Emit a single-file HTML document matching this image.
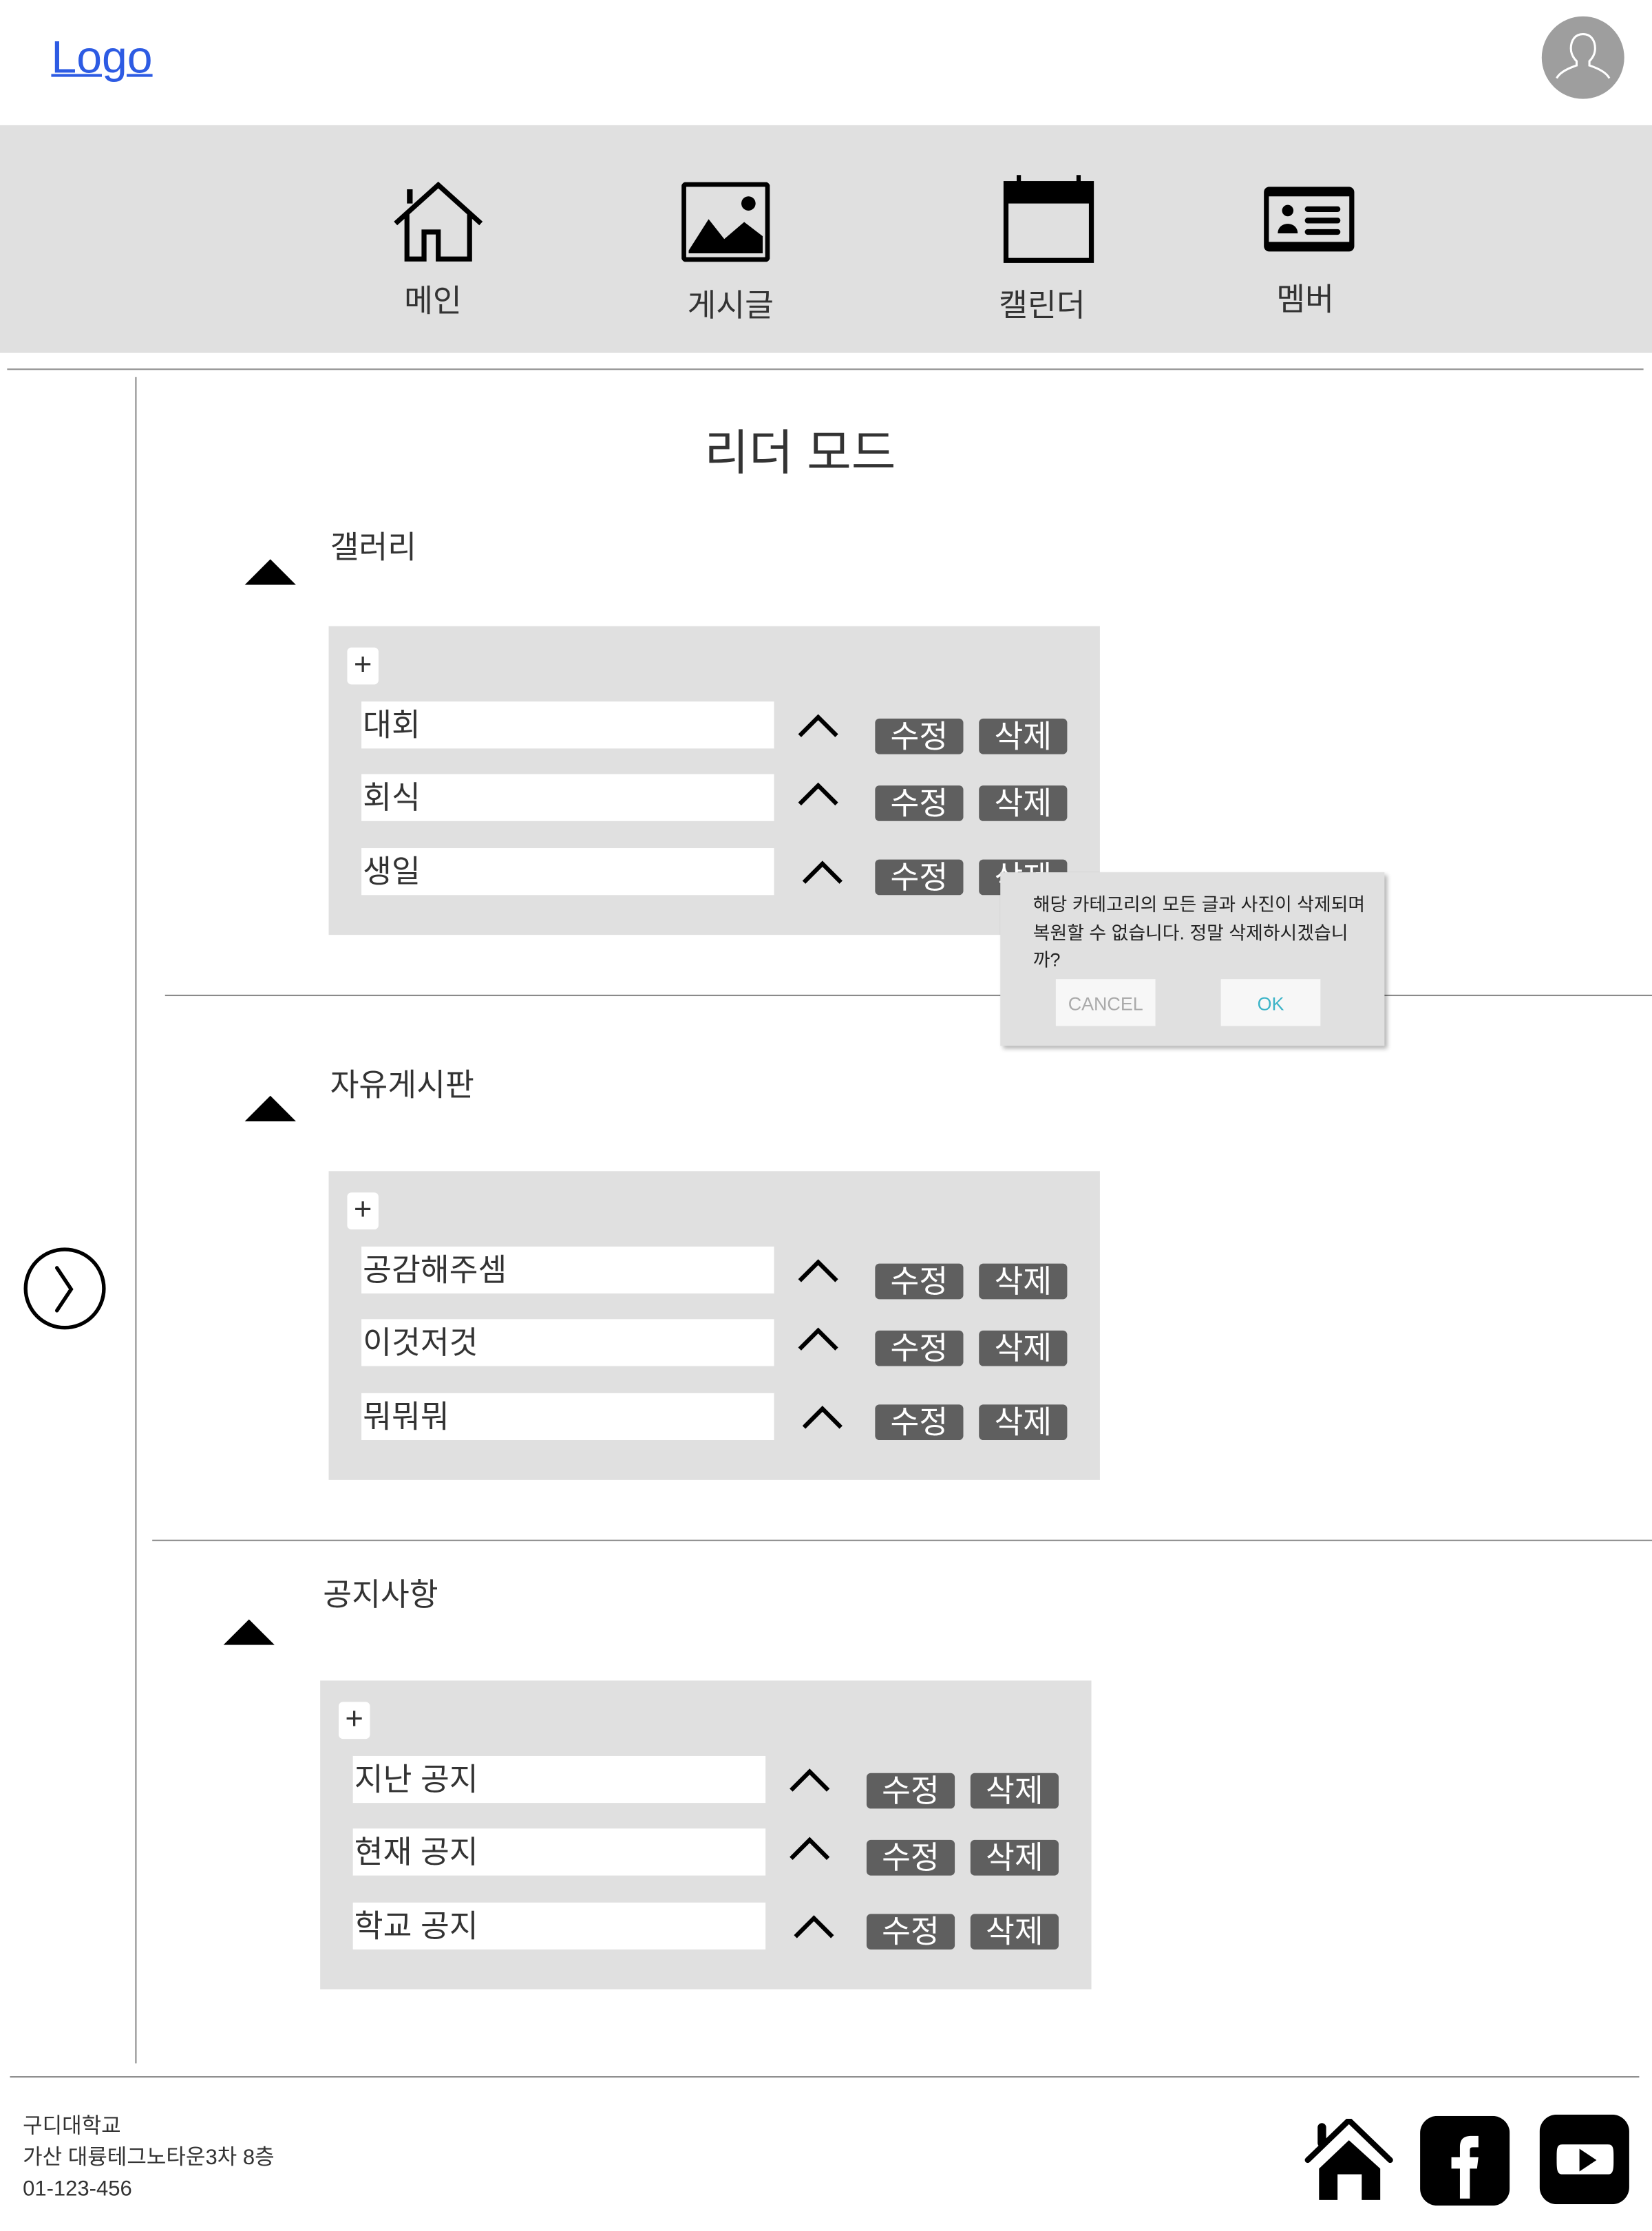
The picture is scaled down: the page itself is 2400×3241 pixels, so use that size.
<!DOCTYPE html>
<html><head><meta charset="utf-8">
<style>
html,body{margin:0;padding:0;background:#fff;width:2400px;height:3240px;overflow:hidden}
#w{position:absolute;left:0;top:0;width:1161px;height:1568px;transform:scale(2.0672,2.0672);transform-origin:0 0;font-family:"Liberation Sans","Noto Sans CJK KR",sans-serif;color:#333}
.a{position:absolute}
.t{position:absolute;white-space:nowrap;line-height:1}
.panel{position:absolute;width:542px;height:217px;background:#e0e0e0}
.plus{position:absolute;left:13px;top:15px;width:22px;height:26px;background:#fff;border-radius:3px;text-align:center;font-size:22px;line-height:24px;color:#333}
.in{position:absolute;left:23px;width:290px;height:33px;background:#fff;font-size:22px;line-height:33px;padding-left:1px;box-sizing:border-box;color:#333}
.btn{position:absolute;width:62px;height:25px;background:#5f5f5f;border-radius:3px;color:#fff;font-size:22px;line-height:25px;text-align:center}
.car{position:absolute;width:30px;height:18px}
.hl{position:absolute;height:1px;background:#8a8a8a}
</style></head><body><div id="w">

<div class="t" style="left:36px;top:24px;font-size:32px;color:#2d5be3;text-decoration:underline;text-decoration-thickness:2px">Logo</div>
<svg class="a" style="left:1083px;top:11px" width="59" height="59" viewBox="0 0 59 59"><circle cx="29.5" cy="29.5" r="29" fill="#9e9e9e"/><path d="M29.5 13c-6 0-8.5 5-8.5 10 0 4 2 7 4 9v3c-6 2-12 5-14 9M29.5 13c6 0 8.5 5 8.5 10 0 4-2 7-4 9v3c6 2 12 5 14 9" fill="none" stroke="#fff" stroke-width="1.5"/></svg>

<div class="a" style="left:0;top:88px;width:1161px;height:160px;background:#e0e0e0"></div>
<svg class="a" style="left:276px;top:127px" width="64" height="58" viewBox="0 0 64 58"><path d="M2 30 L32 3 L62 30" fill="none" stroke="#000" stroke-width="3.5"/><path d="M10 22 V55 H22 V36 H32 V55 H54 V22" fill="none" stroke="#000" stroke-width="3.5"/><path d="M12 6 V16" stroke="#000" stroke-width="4"/></svg>
<svg class="a" style="left:479px;top:128px" width="62" height="56" viewBox="0 0 62 56"><rect x="1.5" y="1.5" width="59" height="53" rx="2" fill="none" stroke="#000" stroke-width="3.5"/><circle cx="47" cy="15" r="5" fill="#000"/><path d="M5 48 L19 26 L30 40 L44 28 L57 38 V50 H5Z" fill="#000"/></svg>
<svg class="a" style="left:705px;top:121px" width="64" height="64" viewBox="0 0 64 64"><rect x="2" y="8" width="60" height="54" fill="none" stroke="#000" stroke-width="3.5"/><rect x="2" y="8" width="60" height="14" fill="#000"/><path d="M11 2 V14 M53 2 V14" stroke="#000" stroke-width="3"/></svg>
<svg class="a" style="left:888px;top:131px" width="64" height="46" viewBox="0 0 64 46"><rect x="2" y="2" width="60" height="42" rx="2" fill="none" stroke="#000" stroke-width="3.5"/><rect x="2" y="2" width="60" height="5" fill="#000"/><rect x="2" y="39" width="60" height="5" fill="#000"/><circle cx="17" cy="17" r="4" fill="#000"/><path d="M10 33 C10 24 24 24 24 33Z" fill="#000"/><rect x="29" y="14" width="25" height="4" rx="2"/><rect x="29" y="22" width="25" height="4" rx="2"/><rect x="29" y="30" width="25" height="4" rx="2"/></svg>
<div class="t" style="left:284px;top:201px;font-size:22px">메인</div>
<div class="t" style="left:483px;top:204px;font-size:22px">게시글</div>
<div class="t" style="left:702px;top:204px;font-size:22px">캘린더</div>
<div class="t" style="left:897px;top:200px;font-size:22px">멤버</div>

<div class="hl" style="left:5px;top:259px;width:1150px"></div>
<div class="a" style="left:95px;top:265px;width:1px;height:1185px;background:#8a8a8a"></div>

<div class="t" style="left:495px;top:302px;font-size:34px">리더 모드</div>

<svg class="a" style="left:172px;top:393px" width="36" height="18"><path d="M0 18 L18 0 L36 18Z" fill="#000"/></svg>
<div class="t" style="left:232px;top:374px;font-size:22px">갤러리</div>
<div class="panel" style="left:231px;top:440px">
<div class="plus">+</div>
<div class="in" style="top:53px">대회</div>
<div class="in" style="top:104px">회식</div>
<div class="in" style="top:156px">생일</div>
<svg class="car" style="left:329px;top:61px"><path d="M2 16 L15 3 L28 16" fill="none" stroke="#000" stroke-width="3"/></svg>
<svg class="car" style="left:329px;top:109px"><path d="M2 16 L15 3 L28 16" fill="none" stroke="#000" stroke-width="3"/></svg>
<svg class="car" style="left:332px;top:164px"><path d="M2 16 L15 3 L28 16" fill="none" stroke="#000" stroke-width="3"/></svg>
<div class="btn" style="left:384px;top:65px">수정</div><div class="btn" style="left:457px;top:65px">삭제</div>
<div class="btn" style="left:384px;top:112px">수정</div><div class="btn" style="left:457px;top:112px">삭제</div>
<div class="btn" style="left:384px;top:164px">수정</div><div class="btn" style="left:457px;top:164px">삭제</div>
</div>
<div class="hl" style="left:116px;top:699px;width:1045px"></div>

<div class="a" style="left:703px;top:613px;width:270px;height:122px;background:#e0e0e0;box-shadow:2px 2px 3px rgba(0,0,0,.3)">
<div class="a" style="left:23px;top:13px;width:234px;font-size:13px;line-height:19.5px;color:#222;word-break:break-all">해당 카테고리의 모든 글과 사진이 삭제되며 복원할 수 없습니다. 정말 삭제하시겠습니까?</div>
<div class="a" style="left:39px;top:75px;width:70px;height:33px;background:#f7f7f7;color:#aaa;font-size:13px;line-height:36px;text-align:center">CANCEL</div>
<div class="a" style="left:155px;top:75px;width:70px;height:33px;background:#f7f7f7;color:#3cb4c8;font-size:13px;line-height:36px;text-align:center">OK</div>
</div>

<svg class="a" style="left:172px;top:770px" width="36" height="18"><path d="M0 18 L18 0 L36 18Z" fill="#000"/></svg>
<div class="t" style="left:232px;top:752px;font-size:22px">자유게시판</div>
<div class="panel" style="left:231px;top:823px">
<div class="plus">+</div>
<div class="in" style="top:53px">공감해주셈</div>
<div class="in" style="top:104px">이것저것</div>
<div class="in" style="top:156px">뭐뭐뭐</div>
<svg class="car" style="left:329px;top:61px"><path d="M2 16 L15 3 L28 16" fill="none" stroke="#000" stroke-width="3"/></svg>
<svg class="car" style="left:329px;top:109px"><path d="M2 16 L15 3 L28 16" fill="none" stroke="#000" stroke-width="3"/></svg>
<svg class="car" style="left:332px;top:164px"><path d="M2 16 L15 3 L28 16" fill="none" stroke="#000" stroke-width="3"/></svg>
<div class="btn" style="left:384px;top:65px">수정</div><div class="btn" style="left:457px;top:65px">삭제</div>
<div class="btn" style="left:384px;top:112px">수정</div><div class="btn" style="left:457px;top:112px">삭제</div>
<div class="btn" style="left:384px;top:164px">수정</div><div class="btn" style="left:457px;top:164px">삭제</div>
</div>
<div class="hl" style="left:107px;top:1082px;width:1054px"></div>

<svg class="a" style="left:157px;top:1138px" width="36" height="18"><path d="M0 18 L18 0 L36 18Z" fill="#000"/></svg>
<div class="t" style="left:227px;top:1110px;font-size:22px">공지사항</div>
<div class="panel" style="left:225px;top:1181px">
<div class="plus">+</div>
<div class="in" style="top:53px">지난 공지</div>
<div class="in" style="top:104px">현재 공지</div>
<div class="in" style="top:156px">학교 공지</div>
<svg class="car" style="left:329px;top:61px"><path d="M2 16 L15 3 L28 16" fill="none" stroke="#000" stroke-width="3"/></svg>
<svg class="car" style="left:329px;top:109px"><path d="M2 16 L15 3 L28 16" fill="none" stroke="#000" stroke-width="3"/></svg>
<svg class="car" style="left:332px;top:164px"><path d="M2 16 L15 3 L28 16" fill="none" stroke="#000" stroke-width="3"/></svg>
<div class="btn" style="left:384px;top:65px">수정</div><div class="btn" style="left:457px;top:65px">삭제</div>
<div class="btn" style="left:384px;top:112px">수정</div><div class="btn" style="left:457px;top:112px">삭제</div>
<div class="btn" style="left:384px;top:164px">수정</div><div class="btn" style="left:457px;top:164px">삭제</div>
</div>

<svg class="a" style="left:16px;top:876px" width="60" height="60" viewBox="0 0 60 60"><circle cx="29.5" cy="29.5" r="27.5" fill="none" stroke="#000" stroke-width="2.6"/><path d="M24 15 L34 30 L24 45" fill="none" stroke="#000" stroke-width="2.6" stroke-linecap="round"/></svg>

<div class="hl" style="left:7px;top:1459px;width:1145px"></div>
<div class="t" style="left:16px;top:1484px;font-size:15px;line-height:22px;white-space:normal;width:300px">구디대학교<br>가산 대륭테그노타운3차 8층<br>01-123-456</div>

<svg class="a" style="left:915px;top:1489px" width="66" height="60" viewBox="0 0 66 60"><path d="M4 25 L33 -3 L62 25" transform="translate(0,4)" fill="none" stroke="#000" stroke-width="4" stroke-linecap="round" stroke-linejoin="round"/><path d="M14 17 V6" stroke="#000" stroke-width="6" stroke-linecap="round"/><path d="M33 15 L55 35 V57 H42 V39 H25 V57 H12 V35Z" fill="#000"/></svg>
<svg class="a" style="left:998px;top:1487px" width="63" height="63" viewBox="0 0 63 63"><rect x="0" y="0" width="63" height="63" rx="12" fill="#000"/><path d="M28 58 V37 H22 V29 H28 V22 C28 16 31 14 36 14 H41 V22 H37 C35 22 35 23 35 25 V29 H41 L40 37 H35 V58Z" fill="#fff"/></svg>
<svg class="a" style="left:1082px;top:1486px" width="63" height="63" viewBox="0 0 63 63"><rect x="0" y="0" width="63" height="63" rx="12" fill="#000"/><path d="M16 21 C12 21 12 24 12 31 C12 38 12 42 16 42 L48 42 C52 42 52 38 52 31 C52 24 52 21 48 21Z" fill="#fff"/><path d="M28 24 L40 32 L28 40Z" fill="#000"/></svg>

</div></body></html>
